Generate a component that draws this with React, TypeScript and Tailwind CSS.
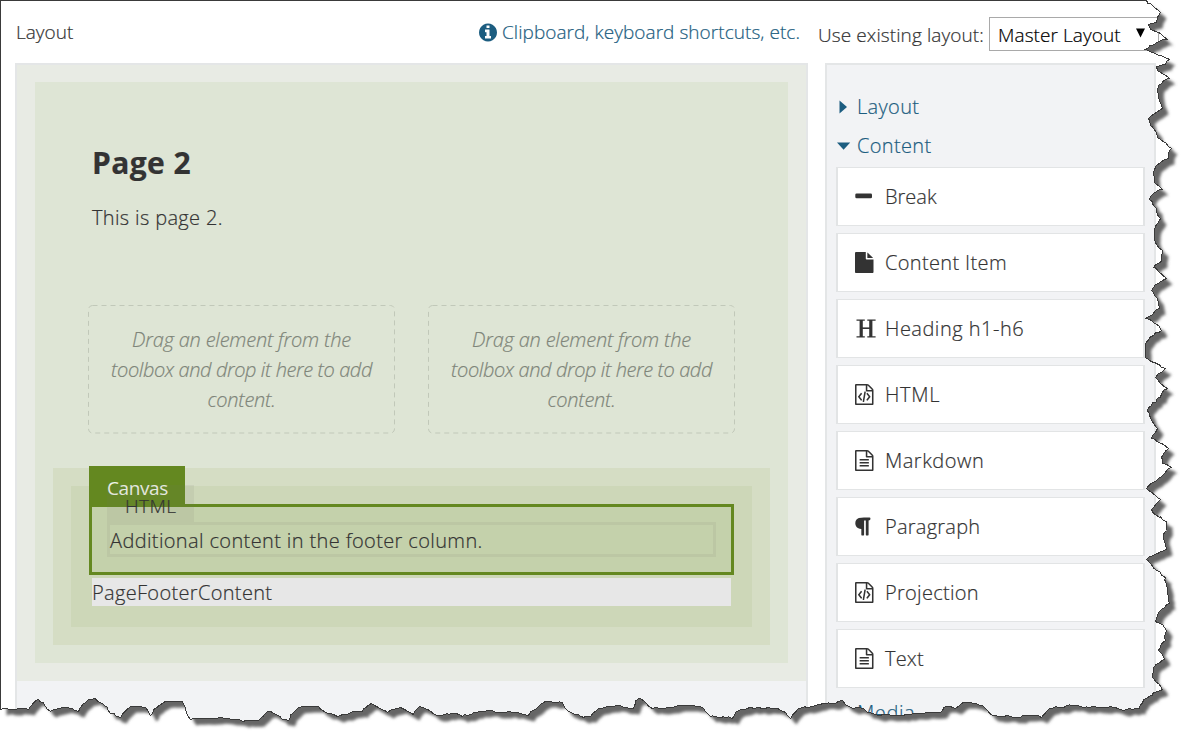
import type { ReactNode } from "react";

const EDGE: [number, number][] = [
  [0, 0], [1146, 0], [1154, 7], [1160, 12], [1157, 17], [1156, 22], [1148, 24], [1150, 29], [1161, 34], [1167, 39],
  [1159, 41], [1145, 49], [1158, 55], [1169, 59], [1165, 64], [1156, 66], [1157, 70], [1169, 78], [1158, 85],
  [1158, 95], [1162, 108], [1148, 118], [1150, 125], [1156, 132], [1157, 137], [1166, 143], [1171, 148],
  [1168, 158], [1155, 166], [1153, 172], [1154, 182], [1162, 189], [1153, 193], [1149, 199], [1156, 208],
  [1160, 218], [1154, 231], [1155, 242], [1162, 250], [1161, 261], [1153, 267], [1158, 271], [1166, 278],
  [1153, 287], [1151, 290], [1157, 298], [1159, 308], [1153, 313], [1145, 318], [1158, 325], [1161, 330],
  [1153, 335], [1145, 343], [1145, 357], [1153, 362], [1165, 368], [1155, 377], [1160, 383], [1167, 388],
  [1160, 397], [1147, 410], [1150, 418], [1157, 428], [1151, 438], [1161, 443], [1168, 448], [1161, 457],
  [1162, 463], [1171, 467], [1161, 476], [1146, 488], [1155, 495], [1160, 499], [1156, 503], [1151, 509],
  [1153, 513], [1166, 521], [1166, 530], [1163, 538], [1166, 549], [1146, 559], [1156, 570], [1165, 577],
  [1167, 588], [1169, 603], [1157, 614], [1155, 621], [1162, 624], [1166, 630], [1165, 640], [1158, 650],
  [1164, 659], [1153, 667], [1152, 677], [1162, 689], [1146, 698], [1139, 708], [1133, 709], [1123, 710],
  [1115, 707], [1100, 707], [1083, 707], [1073, 705], [1063, 707], [1050, 708], [1041, 717], [1030, 715],
  [1020, 717], [1003, 716], [992, 715], [987, 710], [982, 705], [963, 702], [955, 708], [947, 706], [940, 712],
  [923, 713], [903, 715], [878, 715], [867, 712], [862, 708], [853, 708], [845, 704], [842, 700], [835, 703],
  [820, 704], [807, 707], [798, 708], [790, 718], [785, 712], [777, 708], [747, 708], [738, 710], [732, 718],
  [710, 716], [702, 707], [683, 705], [663, 708], [652, 708], [644, 701], [638, 698], [633, 708], [613, 706],
  [600, 708], [590, 716], [583, 717], [568, 711], [562, 702], [543, 702], [537, 707], [528, 715], [520, 713],
  [483, 711], [462, 716], [455, 713], [437, 715], [427, 709], [419, 706], [413, 714], [400, 707], [387, 712],
  [378, 707], [371, 703], [362, 711], [337, 716], [327, 713], [318, 706], [297, 708], [288, 720], [282, 719],
  [270, 711], [258, 720], [243, 721], [227, 718], [213, 718], [190, 719], [182, 701], [162, 703], [150, 715],
  [145, 707], [130, 706], [120, 717], [110, 713], [107, 707], [95, 698], [85, 702], [78, 711], [63, 707],
  [50, 711], [38, 699], [28, 709], [0, 709],
];

/* Breaks the long stretches of the tear into short, slightly uneven steps. */
function tornPath(points: [number, number][]): string {
  let seed = 7;
  const rand = () => {
    seed = (seed * 16807) % 2147483647;
    return seed / 2147483647 - 0.5;
  };
  const out: string[] = [];
  points.forEach(([x, y], i) => {
    out.push(`${x + 0.5},${y + 0.5}`);
    const next = points[i + 1];
    if (!next || i === 0) return;
    const n = Math.floor(Math.hypot(next[0] - x, next[1] - y) / 3);
    for (let k = 1; k < n; k++) {
      const px = x + ((next[0] - x) * k) / n + rand() * 1.8;
      const py = y + ((next[1] - y) * k) / n + rand() * 1.8;
      out.push(`${px.toFixed(1)},${py.toFixed(1)}`);
    }
  });
  return `M${out.join("L")}Z`;
}

const TORN = tornPath(EDGE);
const OUTSIDE = `M-20,-20H1220V780H-20Z${TORN}`;

function TornEdge() {
  return (
    <svg className="pointer-events-none absolute inset-0" width="1192" height="744" viewBox="0 0 1192 744">
      <defs>
        <clipPath id="outside">
          <path d={OUTSIDE} clipRule="evenodd" />
        </clipPath>
        <filter id="soft" x="-5%" y="-5%" width="110%" height="110%">
          <feGaussianBlur stdDeviation="1.4" />
        </filter>
      </defs>
      <path d={OUTSIDE} fill="#fff" fillRule="evenodd" />
      <g clipPath="url(#outside)">
        <path d={TORN} fill="#666" transform="translate(6 6)" filter="url(#soft)" />
      </g>
      <path d={TORN} fill="none" stroke="#3a3a3a" strokeWidth="1" shapeRendering="crispEdges" />
    </svg>
  );
}

const FILE_OUTLINE =
  "M1468 380q28 28 48 76t20 88v1152q0 40-28 68t-68 28h-1344q-40 0-68-28t-28-68v-1600q0-40 28-68t68-28h896q40 0 88 20t76 48zM1024 136v376h376q-10-29-22-41l-313-313q-12-12-41-22zM1408 1664v-1024h-416q-40 0-68-28t-28-68v-416h-768v1536h1280z";
const CODE_MARKS =
  "M480 768q8-11 21-12.5t24 6.5l51 38q11 8 12.5 21t-6.5 24l-182 243 182 243q8 11 6.5 24t-12.5 21l-51 38q-11 8-24 6.5t-21-12.5l-226-301q-14-19 0-38zM1282 1069q14 19 0 38l-226 301q-8 11-21 12.5t-24-6.5l-51-38q-11-8-12.5-21t6.5-24l182-243-182-243q-8-11-6.5-24t12.5-21l51-38q11-8 24-6.5t21 12.5zM662 1530q-13-2-20.5-13t-5.5-24l138-831q2-13 13-20.5t24-5.5l63 10q13 2 20.5 13t5.5 24l-138 831q-2 13-13 20.5t-24 5.5z";
const TEXT_LINES =
  "M384 800q0-14 9-23t23-9h704q14 0 23 9t9 23v64q0 14-9 23t-23 9h-704q-14 0-23-9t-9-23zM1120 1024q14 0 23 9t9 23v64q0 14-9 23t-23 9h-704q-14 0-23-9t-9-23v-64q0-14 9-23t23-9zM1120 1280q14 0 23 9t9 23v64q0 14-9 23t-23 9h-704q-14 0-23-9t-9-23v-64q0-14 9-23t23-9z";
const FILE_SOLID =
  "M1024 512v-472q22 14 36 28l408 408q14 14 28 36h-472zM896 544q0 40 28 68t68 28h544v1056q0 40-28 68t-68 28h-1344q-40 0-68-28t-28-68v-1600q0-40 28-68t68-28h800z";
const PARAGRAPH =
  "M1278 189v73q0 29-18.5 61t-42.5 32q-50 0-54 1-26 6-32 31-3 11-3 64v1152q0 25-18 43t-43 18h-108q-25 0-43-18t-18-43v-1218h-143v1218q0 25-17.5 43t-43.5 18h-108q-26 0-43.5-18t-17.5-43v-496q-147-12-245-59-126-58-192-179-64-117-64-259 0-166 88-286 88-118 209-159 111-37 417-37h479q25 0 43 18t18 43z";
const INFO =
  "M1024 1376v-160q0-14-9-23t-23-9h-96v-512q0-14-9-23t-23-9h-320q-14 0-23 9t-9 23v160q0 14 9 23t23 9h96v320h-96q-14 0-23 9t-9 23v160q0 14 9 23t23 9h448q14 0 23-9t9-23zM896 480v-160q0-14-9-23t-23-9h-192q-14 0-23 9t-9 23v160q0 14 9 23t23 9h192q14 0 23-9t9-23zM1536 896q0 209-103 385.5t-279.5 279.5-385.5 103-385.5-103-279.5-279.5-103-385.5 103-385.5 279.5-279.5 385.5-103 385.5 103 279.5 279.5 103 385.5z";

function Glyph({ d }: { d: string }) {
  return (
    <svg width="18.5" height="21" viewBox="0 0 1536 1792" preserveAspectRatio="none" fill="currentColor">
      <path d={d} />
    </svg>
  );
}

const MinusIcon = (
  <svg width="18" height="21" viewBox="0 0 18 21" fill="currentColor">
    <rect x="0.3" y="7.4" width="16.7" height="4.8" rx="1.3" />
  </svg>
);
const HeadingIcon = (
  <svg width="22" height="21" viewBox="0 0 22 21" fill="none" stroke="currentColor">
    <path strokeWidth="3.2" d="M6.2 2v17M15.8 2v17" />
    <path strokeWidth="1.3" d="M1.5 2.1h8.3M12.3 2.1h8.3M1.5 18.9h8.3M12.3 18.9h8.3" />
    <path strokeWidth="1.6" d="M6.2 10.2h9.6" />
  </svg>
);

const ITEMS: { label: string; icon: ReactNode; track: string }[] = [
  { label: "Break", icon: MinusIcon, track: "tracking-[0px]" },
  { label: "Content Item", icon: <Glyph d={FILE_SOLID} />, track: "tracking-[0.35px]" },
  { label: "Heading h1-h6", icon: HeadingIcon, track: "tracking-[0.5px]" },
  { label: "HTML", icon: <Glyph d={FILE_OUTLINE + CODE_MARKS} />, track: "tracking-[0.7px]" },
  { label: "Markdown", icon: <Glyph d={FILE_OUTLINE + TEXT_LINES} />, track: "tracking-[0.5px]" },
  { label: "Paragraph", icon: <Glyph d={PARAGRAPH} />, track: "tracking-[0.25px]" },
  { label: "Projection", icon: <Glyph d={FILE_OUTLINE + CODE_MARKS} />, track: "tracking-[0.3px]" },
  { label: "Text", icon: <Glyph d={FILE_OUTLINE + TEXT_LINES} />, track: "tracking-[0.2px]" },
];

function DropZone() {
  return (
    <div className="relative h-[129px] w-[307px] pt-[20px] text-center text-[20px] leading-[30px] text-[#7f857a] italic">
      <svg className="absolute inset-0" width="307" height="129" fill="none" stroke="#c1c8b9">
        <rect x="0.5" y="0.5" width="306" height="127.5" rx="4" strokeDasharray="5 4" />
      </svg>
      <p className="tracking-[-0.2px]">Drag an element from the</p>
      <p className="tracking-[-0.4px]">toolbox and drop it here to add</p>
      <p className="tracking-[-0.25px]">content.</p>
    </div>
  );
}

export default function App() {
  return (
    <div className="relative h-[744px] w-[1192px] overflow-hidden bg-white font-['Open_Sans','Noto_Sans',sans-serif] text-[20px] leading-[30px] font-light whitespace-nowrap text-[#333] [-webkit-text-stroke:0.2px]">
      <header className="flex h-[63px] pl-[16px]">
        <div className="w-[463px] pt-[17px] text-[19px]">Layout</div>
        <a className="flex w-[339px] pt-[17px] text-[#1c5d80]">
          <svg className="mt-[5px] mr-[5px]" width="18" height="21" viewBox="0 0 1536 1792" fill="currentColor">
            <path d={INFO} />
          </svg>
          <span className="text-[19px] tracking-[0.05px]">Clipboard, keyboard shortcuts, etc.</span>
        </a>
        <label className="w-[171px] pt-[20px] text-[19px] tracking-[0.1px]">Use existing layout:</label>
        <div className="mt-[17px] flex h-[34px] w-[170px] border border-[#a9a9a9] pl-[8px] text-[19px] leading-[34px] tracking-[0.08px] text-black">
          <span className="w-[138px]">Master Layout</span>
          <svg className="mt-[10px]" width="9" height="10" fill="currentColor">
            <path d="M0 0.5H9L4.5 9.5Z" />
          </svg>
        </div>
      </header>

      <div className="flex gap-[17px] pl-[15px]">
        <main className="h-[681px] w-[793px] border-2 border-[#e4e6e7] bg-[#f2f3f5]">
          <div className="h-[616px] bg-[#e8ebe4] px-[18px] pt-[17px]">
            <div className="h-[581px] bg-[#dee5d5] px-[18px]">
              <div className="h-[223px] pt-[62px] pl-[39px]">
                <h1 className="text-[30px] leading-[38px] font-bold tracking-[0.4px]">Page 2</h1>
                <p className="mt-[21px] tracking-[0.35px]">This is page 2.</p>
              </div>
              <div className="flex gap-[33px] pl-[35px]">
                <DropZone />
                <DropZone />
              </div>
              <div className="mt-[34px] h-[177px] bg-[#d5ddc4] p-[18px]">
                <div className="h-[141px] bg-[#cdd7b8] p-[18px]">
                  <section className="relative h-[71px] border-3 border-[#648820] bg-[#c4d1ab] p-[15px]">
                    <div className="absolute -top-[41px] -left-[3px] h-[41px] w-[96px] bg-[#648820] pt-[7px] pl-[18px] text-[19px] font-normal tracking-[-0.4px] text-[#f0f4ea] [-webkit-text-stroke:0px]">
                      Canvas
                    </div>
                    <div className="relative h-[35px] border-3 border-[#72726e]/10">
                      <div className="absolute -top-[40px] -left-[3px] h-[37px] w-[87px] bg-[#72726e]/10 pt-[6px] pl-[18px] text-[19px] tracking-[0.4px]">
                        HTML
                      </div>
                      <p className="pt-px tracking-[0.37px]">Additional content in the footer column.</p>
                    </div>
                  </section>
                  <div className="mx-[3px] mt-[3px] h-[28px] bg-[#e7e7e7] leading-[29px] tracking-[0.33px]">
                    PageFooterContent
                  </div>
                </div>
              </div>
            </div>
          </div>
        </main>

        <aside className="h-[681px] w-[331px] border-2 border-[#e4e6e7] bg-[#f2f3f5] px-[9px] pt-[27px]">
          <div className="flex h-[39px] tracking-[0.35px] text-[#1c5d80]">
            <svg className="mt-[8px]" width="21" height="14" fill="currentColor">
              <path d="M3.5 0.5L11 7L3.5 13.5Z" />
            </svg>
            Layout
          </div>
          <div className="flex h-[36px] tracking-[0.35px] text-[#1c5d80]">
            <svg className="mt-[8px]" width="21" height="14" fill="currentColor">
              <path d="M1 3.5H14.2L7.6 10.8Z" />
            </svg>
            Content
          </div>
          <ul className="flex flex-col gap-[7px]">
            {ITEMS.map((item) => (
              <li key={item.label} className="flex h-[59px] border-x-2 border-y border-[#e2e4e5] bg-white pl-[17px]">
                <span className="w-[30px] pt-[18px]">{item.icon}</span>
                <span className={`pt-[14px] ${item.track}`}>{item.label}</span>
              </li>
            ))}
          </ul>
          <div className="mt-[10px] pl-[21px] tracking-[0.6px] text-[#1c5d80]">Media</div>
        </aside>
      </div>
      <TornEdge />
    </div>
  );
}
